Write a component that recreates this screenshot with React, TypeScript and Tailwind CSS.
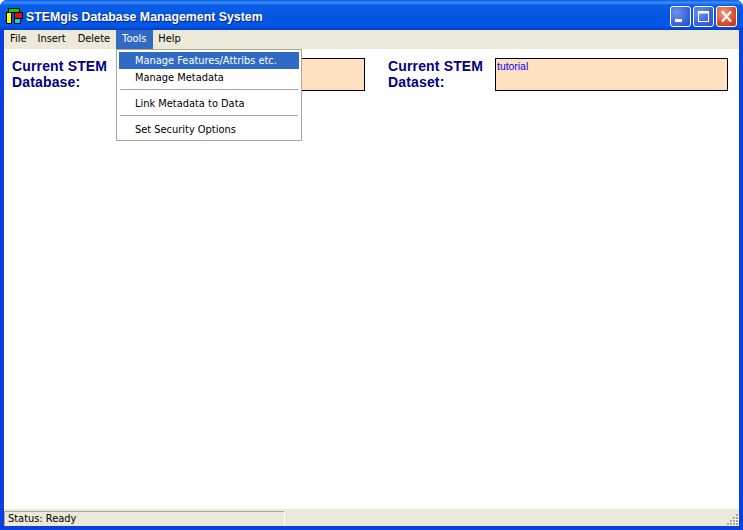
import React from "react";

function AppIcon() {
  return (
    <svg width="17" height="17" viewBox="0 0 17 17" className="shrink-0">
      <rect x="2" y="0" width="12" height="5" fill="#000" />
      <rect x="0" y="4" width="6" height="12" fill="#000" />
      <rect x="8" y="4" width="9" height="7" fill="#000" />
      <rect x="8" y="10" width="7" height="6" fill="#000" />
      <rect x="3" y="1" width="10" height="3" fill="#00d020" />
      <rect x="1" y="5" width="4" height="10" fill="#ffff00" />
      <rect x="9" y="5" width="7" height="5" fill="#e01010" />
      <rect x="9" y="11" width="5" height="4" fill="#10d0e0" />
    </svg>
  );
}

function CaptionButton({ kind }: { kind: "min" | "max" | "close" }) {
  const bg =
    kind === "close"
      ? "bg-[radial-gradient(circle_at_35%_30%,#f0a080,#dd5030_55%,#c03010)]"
      : "bg-[radial-gradient(circle_at_30%_30%,#6f94ee,#3c64dc_60%,#2a4cc8)]";
  return (
    <div className={`w-[21px] h-[21px] rounded-[3px] border border-white flex items-center justify-center ${bg}`}>
      <svg width="19" height="19" viewBox="0 0 19 19">
        {kind === "min" && <rect x="4" y="12" width="7" height="3" fill="#fff" />}
        {kind === "max" && (
          <>
            <rect x="4.5" y="4.5" width="10" height="10" fill="none" stroke="#fff" />
            <rect x="4" y="4" width="11" height="2.5" fill="#fff" />
          </>
        )}
        {kind === "close" && (
          <path d="M5 4.5 L14 14.5 M14 4.5 L5 14.5" stroke="#fff" strokeWidth="2.2" fill="none" />
        )}
      </svg>
    </div>
  );
}

function Label({ l1, l2 }: { l1: string; l2: string }) {
  return (
    <div className="font-['Liberation_Sans',sans-serif] font-bold text-[14px] leading-[16px] text-[#000080] tracking-[0.15px]">
      <div>{l1}</div>
      <div>{l2}</div>
    </div>
  );
}

const menuFont = "font-['DejaVu_Sans',sans-serif] text-[9.85px] text-black";
const gripDots: [number, number][] = [
  [9, 0], [6, 3], [9, 3], [3, 6], [6, 6], [9, 6], [0, 9], [3, 9], [6, 9], [9, 9],
];

export default function App() {
  return (
    <div className="w-[743px] h-[530px] relative overflow-hidden bg-[#0c3ee0] rounded-t-[7px] flex flex-col">
      {/* Title bar */}
      <div className="h-[30px] shrink-0 flex items-center pl-[6px] pr-[6px] pt-[2px] bg-[linear-gradient(180deg,#0a5ae6_0%,#3c8cfa_8%,#0a5fe6_18%,#0354e0_55%,#0358e8_85%,#0340c8_100%)]">
        <AppIcon />
        <span className="ml-[3px] mt-[2px] font-['Liberation_Sans',sans-serif] font-bold text-[12.35px] text-white [text-shadow:1px_1px_0_#0a1f80]">
          STEMgis Database Management System
        </span>
        <div className="ml-auto flex gap-[2px]">
          <CaptionButton kind="min" />
          <CaptionButton kind="max" />
          <CaptionButton kind="close" />
        </div>
      </div>

      {/* Client */}
      <div className="flex-1 flex flex-col mx-[4px] mb-[4px] bg-white min-h-0">
        {/* Menu bar */}
        <div className={`h-[19px] shrink-0 bg-[#ece9d8] flex items-center ${menuFont}`}>
          <span className="pl-[6px] pr-[5px] h-full flex items-center">File</span>
          <span className="px-[6px] h-full flex items-center">Insert</span>
          <span className="px-[6px] h-full flex items-center">Delete</span>
          <span className="pl-[6px] pr-[7px] h-full flex items-center bg-[#316ac5] text-white">Tools</span>
          <span className="px-[5px] h-full flex items-center">Help</span>
        </div>

        {/* Content */}
        <div className="flex-1 flex items-start pt-[9px] pl-[8px] min-h-0">
          <div className="w-[108px] shrink-0"><Label l1="Current STEM" l2="Database:" /></div>
          <div className="w-[245px] h-[33px] shrink-0 bg-[#ffe0c0] border border-black" />
          <div className="ml-[23px] w-[107px] shrink-0"><Label l1="Current STEM" l2="Dataset:" /></div>
          <div className="w-[233px] h-[33px] shrink-0 bg-[#ffe0c0] border border-black px-[1px] font-['Liberation_Sans',sans-serif] text-[10.4px] leading-[16px] text-[#0000ff]">
            tutorial
          </div>
        </div>

        {/* Status bar */}
        <div className="h-[17px] shrink-0 bg-[#ece9d8] flex relative">
          <div className={`w-[281px] h-[15px] mt-[2px] border-t border-l border-t-[#aca899] border-l-[#aca899] border-r border-r-white pl-[3px] pt-[1px] flex items-center ${menuFont}`}>
            Status: Ready
          </div>
          <svg width="12" height="12" viewBox="0 0 12 12" className="absolute right-0 bottom-0">
            {gripDots.map(([x, y]) => (
              <g key={`${x}-${y}`}>
                <rect x={x + 1} y={y + 1} width="2" height="2" fill="#fff" />
                <rect x={x} y={y} width="2" height="2" fill="#aca899" />
              </g>
            ))}
          </svg>
        </div>
      </div>

      {/* Dropdown */}
      <div className={`absolute left-[116px] top-[49px] w-[186px] h-[92px] bg-white border border-[#aca899] p-[2px] flex flex-col ${menuFont}`}>
        <div className="h-[17px] shrink-0 pl-[16px] pt-[1px] flex items-center bg-[#316ac5] text-white">Manage Features/Attribs etc.</div>
        <div className="h-[17px] shrink-0 pl-[16px] pt-[1px] flex items-center">Manage Metadata</div>
        <div className="h-px shrink-0 mt-[3px] mb-[5px] mx-[1px] bg-[#aca899]" />
        <div className="h-[17px] shrink-0 pl-[16px] pt-[1px] flex items-center">Link Metadata to Data</div>
        <div className="h-px shrink-0 mt-[3px] mb-[5px] mx-[1px] bg-[#aca899]" />
        <div className="h-[17px] shrink-0 pl-[16px] pt-[1px] flex items-center">Set Security Options</div>
      </div>
    </div>
  );
}
